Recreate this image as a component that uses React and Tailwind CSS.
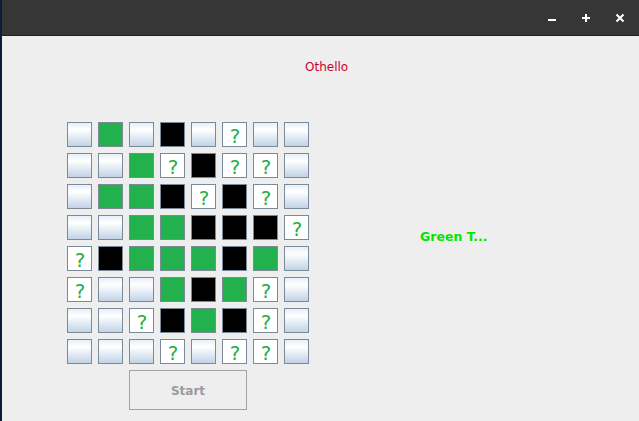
import React from 'react';

const rows = [
  'EGEBE?EE',
  'EEG?B??E',
  'EGGB?B?E',
  'EEGGBBB?',
  '?BGGGBGE',
  '?EEGBG?E',
  'EE?BGB?E',
  'EEE?E??E',
];

function Cell({ kind }) {
  if (kind === 'G') return <div className="h-[25px] w-[25px] border border-[#7a8a99] bg-[#22b14c]" />;
  if (kind === 'B') return <div className="h-[25px] w-[25px] border border-[#7a8a99] bg-black" />;
  if (kind === '?')
    return (
      <div className="flex h-[25px] w-[25px] items-center justify-center border border-[#7a8a99] bg-white pl-px pt-[3px] text-[20px] leading-none text-[#1fae48]">
        ?
      </div>
    );
  return (
    <div className="h-[25px] w-[25px] border border-[#7a8a99] bg-linear-to-b from-[#e8eff7] via-white via-30% to-[#c1d3e6]" />
  );
}

export default function App() {
  return (
    <div
      className="flex h-[421px] w-[639px] overflow-hidden bg-[#0e1d36]"
      style={{ fontFamily: '"DejaVu Sans", sans-serif' }}
    >
      <div className="w-[2px] shrink-0" />
      <div className="flex flex-1 flex-col">
        {/* Title bar */}
        <div className="flex h-[36px] shrink-0 items-center justify-end gap-[24px] border-b border-[#1d1d1d] bg-[#363636] pr-[14px]">
          <svg width="10" height="10" viewBox="0 0 10 10">
            <rect x="1" y="6" width="8" height="2" fill="#fff" />
          </svg>
          <svg width="10" height="10" viewBox="0 0 10 10">
            <rect x="1" y="4" width="8" height="2" fill="#fff" />
            <rect x="4" y="1" width="2" height="8" fill="#fff" />
          </svg>
          <svg width="10" height="10" viewBox="0 0 10 10">
            <path d="M1.5 1.5 L8.5 8.5 M8.5 1.5 L1.5 8.5" stroke="#fff" strokeWidth="2" />
          </svg>
        </div>

        {/* Content */}
        <div className="flex-1 bg-[#eeeeee]">
          <div className="pl-[303px] pt-[24px] text-[12px] leading-[14px] text-[#c8002e]">Othello</div>

          <div className="mt-[48px] flex items-start pl-[65px]">
            <div className="flex flex-col">
              <div className="grid grid-cols-8 gap-[6px]">
                {rows.map((r, i) =>
                  r.split('').map((k, j) => <Cell key={`${i}-${j}`} kind={k} />)
                )}
              </div>
              <button className="ml-[62px] mt-[6px] h-[40px] w-[118px] border border-[#a3a3a3] pt-[2px] text-[12px] font-bold text-[#9a9a9a]">
                Start
              </button>
            </div>
            <div className="ml-[111px] mt-[108px] text-[12.5px] font-bold leading-[14px] text-[#00e600]">
              Green T...
            </div>
          </div>
        </div>
      </div>
    </div>
  );
}
